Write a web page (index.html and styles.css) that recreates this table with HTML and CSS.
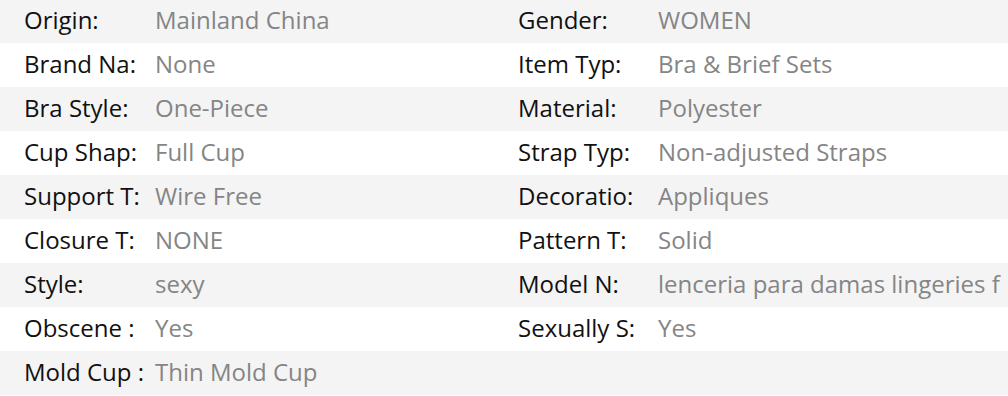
FILE: index.html
```html
<!DOCTYPE html>
<html>
<head>
<meta charset="utf-8">
<link rel="stylesheet" href="styles.css">
</head>
<body>
<ul class="specs">
  <li class="row">
    <div class="item left"><span class="label">Origin:</span><span class="value">Mainland China</span></div>
    <div class="item right"><span class="label">Gender:</span><span class="value">WOMEN</span></div>
  </li>
  <li class="row">
    <div class="item left"><span class="label">Brand Na:</span><span class="value">None</span></div>
    <div class="item right"><span class="label">Item Typ:</span><span class="value">Bra &amp; Brief Sets</span></div>
  </li>
  <li class="row">
    <div class="item left"><span class="label">Bra Style:</span><span class="value">One-Piece</span></div>
    <div class="item right"><span class="label">Material:</span><span class="value">Polyester</span></div>
  </li>
  <li class="row">
    <div class="item left"><span class="label">Cup Shap:</span><span class="value">Full Cup</span></div>
    <div class="item right"><span class="label">Strap Typ:</span><span class="value">Non-adjusted Straps</span></div>
  </li>
  <li class="row">
    <div class="item left"><span class="label">Support T:</span><span class="value">Wire Free</span></div>
    <div class="item right"><span class="label">Decoratio:</span><span class="value">Appliques</span></div>
  </li>
  <li class="row">
    <div class="item left"><span class="label">Closure T:</span><span class="value">NONE</span></div>
    <div class="item right"><span class="label">Pattern T:</span><span class="value">Solid</span></div>
  </li>
  <li class="row">
    <div class="item left"><span class="label">Style:</span><span class="value">sexy</span></div>
    <div class="item right"><span class="label">Model N:</span><span class="value">lenceria para damas lingeries f</span></div>
  </li>
  <li class="row">
    <div class="item left"><span class="label">Obscene :</span><span class="value">Yes</span></div>
    <div class="item right"><span class="label">Sexually S:</span><span class="value">Yes</span></div>
  </li>
  <li class="row">
    <div class="item left"><span class="label">Mold Cup :</span><span class="value">Thin Mold Cup</span></div>
    <div class="item right"></div>
  </li>
</ul>
</body>
</html>
```

FILE: styles.css
```css
html, body {
  margin: 0;
  padding: 0;
  background: #ffffff;
}
.specs {
  list-style: none;
  margin: -1px 0 0 0;
  padding: 0;
  font-family: "Open Sans", "Noto Sans", sans-serif;
  font-size: 24px;
  line-height: 30px;
  width: 1008px;
}
.row {
  display: grid;
  grid-template-columns: 494px minmax(0, 1fr);
  height: 44px;
  box-sizing: border-box;
  padding: 0 0 3px 24px;
  align-items: center;
  white-space: nowrap;
}
.row:nth-child(odd) {
  background: #f4f4f4;
}
.item {
  display: grid;
  align-items: center;
  min-width: 0;
}
.left { grid-template-columns: 131px minmax(0, 1fr); }
.right { grid-template-columns: 140px minmax(0, 1fr); }
.label {
  color: #111111;
}
.value {
  color: #858585;
}
```
